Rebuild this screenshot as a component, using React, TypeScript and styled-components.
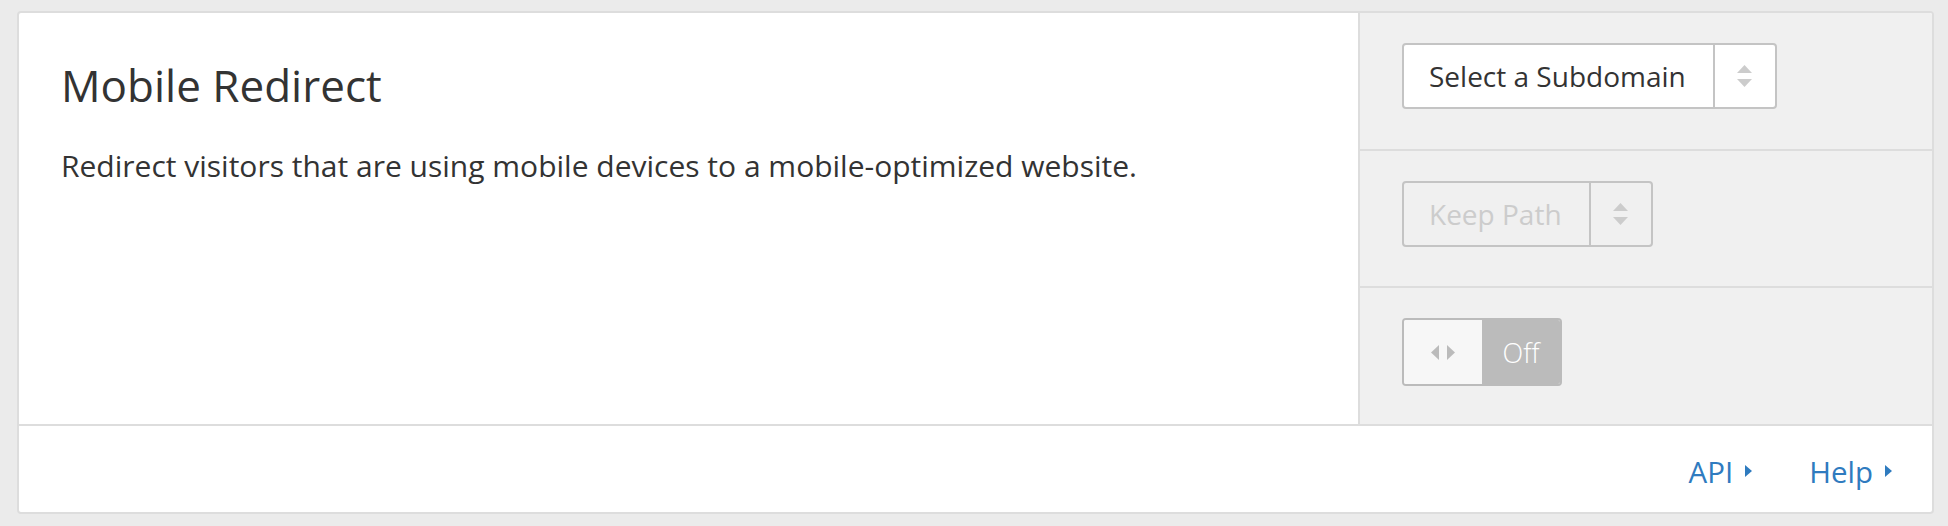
import React from "react";
import styled, { createGlobalStyle } from "styled-components";

const Global = createGlobalStyle`
  html, body { margin: 0; padding: 0; background: #ebebeb; }
  body { font-family: "Open Sans", "Liberation Sans", sans-serif; color: #333; }
  * { box-sizing: border-box; }
`;

const Page = styled.div`
  padding: 11px 14px 12px 17px;
`;

const Card = styled.div`
  width: 1917px;
  background: #fff;
  border: 2px solid #dddddd;
  border-radius: 4px;
  display: flex;
  flex-direction: column;
  overflow: hidden;
`;

const Top = styled.div`
  display: flex;
  height: 413px;
  border-bottom: 2px solid #dddddd;
`;

const Info = styled.div`
  flex: 1;
  padding: 46px 42px 0 42px;
`;

const Title = styled.h3`
  margin: 0;
  font-size: 44px;
  font-weight: 400;
  line-height: 52px;
  color: #333;
`;

const Description = styled.p`
  margin: 33px 0 0 0;
  font-size: 30px;
  line-height: 43px;
  color: #333;
`;

const Controls = styled.div`
  width: 574px;
  background: #f0f0f0;
  border-left: 2px solid #dddddd;
  display: flex;
  flex-direction: column;
`;

const ControlRow = styled.div<{ $last?: boolean }>`
  flex: 1;
  padding: 30px 42px 0 42px;
  border-bottom: ${(p) => (p.$last ? "none" : "2px solid #dddddd")};
`;

const Select = styled.div<{ $disabled?: boolean }>`
  display: inline-flex;
  height: 66px;
  border: 2px solid #c4c4c4;
  border-radius: 4px;
  background: ${(p) => (p.$disabled ? "#f0f0f0" : "#fff")};
  color: ${(p) => (p.$disabled ? "#cccccc" : "#333")};
  font-size: 28px;
`;

const SelectLabel = styled.div`
  display: flex;
  align-items: center;
  padding: 0 27px 0 25px;
  border-right: 2px solid #c4c4c4;
  white-space: nowrap;
`;

const SelectArrows = styled.div`
  width: 60px;
  display: flex;
  flex-direction: column;
  align-items: center;
  justify-content: center;
  gap: 6px;
`;

const Toggle = styled.div`
  display: inline-flex;
  height: 68px;
  width: 160px;
  border: 2px solid #bbbbbb;
  border-radius: 4px;
  overflow: hidden;
`;

const ToggleHandle = styled.div`
  width: 78px;
  background: #f7f7f7;
  display: flex;
  align-items: center;
  justify-content: center;
  gap: 8px;
`;

const ToggleState = styled.div`
  flex: 1;
  background: #bbbbbb;
  color: #fff;
  display: flex;
  align-items: center;
  justify-content: center;
  font-size: 27px;
  font-weight: 300;
`;

const Footer = styled.div`
  height: 86px;
  display: flex;
  justify-content: flex-end;
  align-items: center;
  padding: 4px 40px 0 0;
  gap: 57px;
`;

const FooterLink = styled.a`
  display: inline-flex;
  align-items: center;
  gap: 12px;
  font-size: 29.5px;
  color: #2f7bbf;
  text-decoration: none;
`;

const Tri = ({ dir, color, w, h }: { dir: "up" | "down" | "left" | "right"; color: string; w: number; h: number }) => {
  const pts =
    dir === "up"
      ? `0,${h} ${w / 2},0 ${w},${h}`
      : dir === "down"
      ? `0,0 ${w},0 ${w / 2},${h}`
      : dir === "left"
      ? `${w},0 ${w},${h} 0,${h / 2}`
      : `0,0 ${w},${h / 2} 0,${h}`;
  return (
    <svg width={w} height={h} viewBox={`0 0 ${w} ${h}`} style={{ display: "block" }}>
      <polygon points={pts} fill={color} />
    </svg>
  );
};

const UpDown = () => (
  <SelectArrows>
    <Tri dir="up" color="#cccccc" w={15} h={8} />
    <Tri dir="down" color="#cccccc" w={15} h={8} />
  </SelectArrows>
);

export default function App() {
  return (
    <>
      <Global />
      <Page>
        <Card>
          <Top>
            <Info>
              <Title>Mobile Redirect</Title>
              <Description>
                Redirect visitors that are using mobile devices to a mobile-optimized website.
              </Description>
            </Info>
            <Controls>
              <ControlRow>
                <Select>
                  <SelectLabel>Select a Subdomain</SelectLabel>
                  <UpDown />
                </Select>
              </ControlRow>
              <ControlRow>
                <Select $disabled>
                  <SelectLabel>Keep Path</SelectLabel>
                  <UpDown />
                </Select>
              </ControlRow>
              <ControlRow $last>
                <Toggle>
                  <ToggleHandle>
                    <Tri dir="left" color="#bbbbbb" w={8} h={15} />
                    <Tri dir="right" color="#bbbbbb" w={8} h={15} />
                  </ToggleHandle>
                  <ToggleState>Off</ToggleState>
                </Toggle>
              </ControlRow>
            </Controls>
          </Top>
          <Footer>
            <FooterLink href="#">
              API
              <Tri dir="right" color="#2f7bbf" w={7} h={12} />
            </FooterLink>
            <FooterLink href="#">
              Help
              <Tri dir="right" color="#2f7bbf" w={7} h={12} />
            </FooterLink>
          </Footer>
        </Card>
      </Page>
    </>
  );
}
